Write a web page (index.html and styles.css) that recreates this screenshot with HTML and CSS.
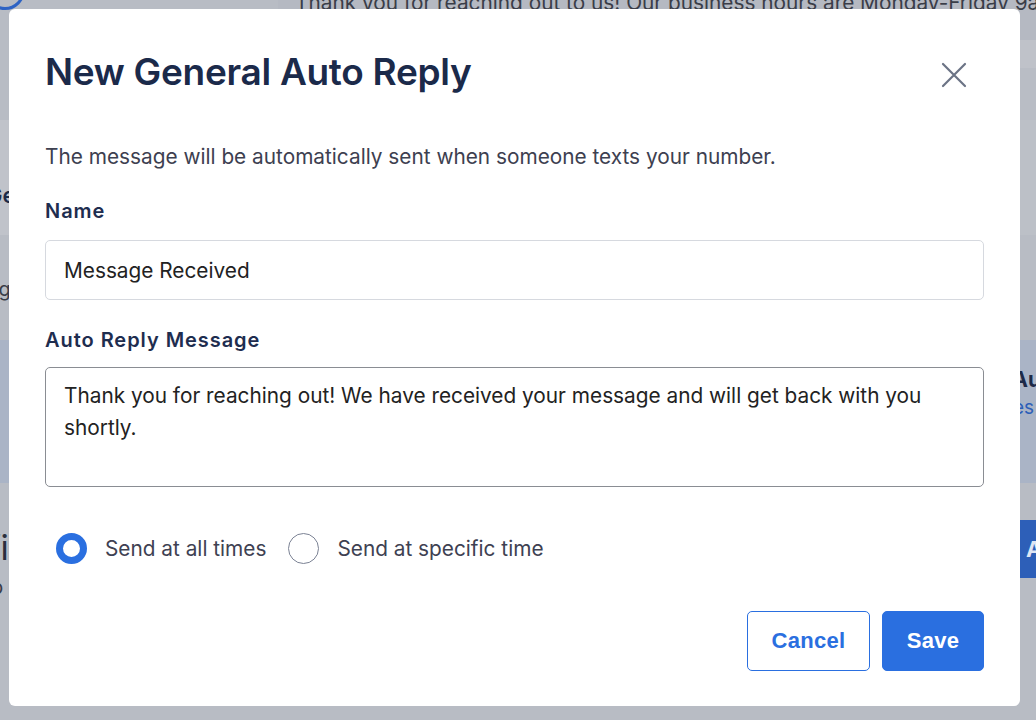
FILE: index.html
```html
<!DOCTYPE html>
<html lang="en">
<head>
<meta charset="utf-8">
<title>New General Auto Reply</title>
<link rel="stylesheet" href="styles.css">
</head>
<body>
<div class="app">
  <div class="band b1">
    <div class="side-l"><span class="avatar"></span></div>
    <div class="main-top"><p class="bg-text">Thank you for reaching out to us! Our business hours are Monday-Friday 9am to 5pm.</p></div>
  </div>
  <div class="band b2">
    <div class="side-l"><span class="bg-word">Ge</span></div>
    <div class="main-mid"></div>
  </div>
  <div class="band b3">
    <div class="side-l"><span class="bg-small">Msg</span></div>
    <div class="main-mid"></div>
  </div>
  <div class="band b4">
    <div class="side-l"></div>
    <div class="main-blue"><span class="bg-bold">Au</span><span class="bg-link">es</span></div>
  </div>
  <div class="band b5">
    <div class="side-l"><span class="bg-big">fi</span><span class="bg-small">p</span></div>
    <div class="main-low"><span class="bg-btn">A</span></div>
  </div>
</div>

<div class="overlay">
  <div class="modal" role="dialog" aria-labelledby="modal-title">
    <div class="modal-head">
      <h1 id="modal-title" class="modal-title">New General Auto Reply</h1>
      <button class="close" aria-label="Close">
        <svg width="26" height="26" viewBox="0 0 26 26"><path d="M2 2 L24 24 M24 2 L2 24" stroke="#6b7385" stroke-width="2.2" stroke-linecap="round" fill="none"/></svg>
      </button>
    </div>
    <p class="subtitle">The message will be automatically sent when someone texts your number.</p>
    <label class="field-label" for="name">Name</label>
    <div class="input" id="name">Message Received</div>
    <label class="field-label second" for="msg">Auto Reply Message</label>
    <div class="textarea" id="msg">Thank you for reaching out! We have received your message and will get back with you shortly.</div>
    <div class="radios">
      <div class="radio-item"><span class="radio checked"></span><span class="radio-text">Send at all times</span></div>
      <div class="radio-item"><span class="radio"></span><span class="radio-text">Send at specific time</span></div>
    </div>
    <div class="actions">
      <button class="btn btn-outline">Cancel</button>
      <button class="btn btn-primary">Save</button>
    </div>
  </div>
</div>
</body>
</html>
```
FILE: styles.css
```css
* { box-sizing: border-box; }
html, body { margin: 0; padding: 0; }
body {
  width: 1036px;
  height: 720px;
  overflow: hidden;
  font-family: Inter, "Noto Sans", sans-serif;
  background: #b9bcc4;
}

/* background app (already dimmed) */
.app { display: flex; flex-direction: column; height: 720px; }
.band { display: flex; }
.side-l { width: 278px; flex-shrink: 0; position: relative; overflow: hidden; }
.main-top, .main-mid, .main-blue, .main-low { flex: 1; min-width: 0; overflow: hidden; display: flex; justify-content: flex-end; }
.b1 { height: 120px; }
.b1 .side-l { background: #b8bcc4; }
.main-top { background: linear-gradient(#b5b9c2 0 40px, #bfc2c9 40px 68px, #b9bdc5 68px); justify-content: flex-start; }
.bg-text { margin: -10px 0 0 17px; font-size: 20.8px; color: #3a3d48; white-space: nowrap; }
.avatar { display: block; width: 40px; height: 40px; border: 3px solid #2e63c4; border-radius: 50%; margin: -30px 0 0 -15px; }
.b2 { height: 115px; }
.b2 .side-l { background: #c0c3ca; }
.b2 .main-mid { background: #bcc0c7; }
.bg-word { position: absolute; left: -14px; top: 62px; font-size: 22px; font-weight: 600; color: #1d2a48; }
.b3 { height: 105px; }
.b3 .side-l, .b3 .main-mid { background: #b8bcc4; }
.bg-small { position: absolute; left: -30px; top: 42px; font-size: 20px; color: #3a3d48; }
.b4 { height: 143px; }
.b4 .side-l, .main-blue { background: #aab4c6; }
.main-blue { flex-direction: column; justify-content: flex-start; align-items: flex-end; padding-top: 26px; line-height: 28px; }
.bg-bold { font-size: 21px; font-weight: 700; color: #1d2a48; margin-right: -5px; }
.bg-link { font-size: 19px; color: #2d5fb8; margin-right: 2px; }
.b5 { flex: 1; }
.b5 .side-l { background: #b8bcc4; }
.main-low { background: #b8bcc4; align-items: flex-start; }
.bg-btn { margin-top: 37px; width: 16px; height: 58px; background: #2d5fb8; color: #dfe6f3; font-weight: 700; font-size: 22px; line-height: 58px; padding-left: 6px; overflow: hidden; }
.b5 .bg-big { position: absolute; left: -12px; top: 44px; font-size: 34px; color: #2b2f3d; }
.b5 .bg-small { top: 92px; left: -9px; }

/* modal */
.overlay { position: fixed; inset: 0; }
.modal {
  position: absolute;
  left: 9px;
  top: 9px;
  width: 1011px;
  height: 697px;
  background: #fff;
  border-radius: 6px;
  padding: 42px 36px 0 36px;
  display: flex;
  flex-direction: column;
}
.modal-head { display: flex; justify-content: space-between; align-items: flex-start; }
.modal-title {
  margin: 0;
  font-size: 37px;
  font-weight: 600;
  color: #1b2a4a;
  line-height: 42px;
  letter-spacing: -0.3px;
}
.close { border: 0; background: none; padding: 0; margin: 11px 17px 0 0; width: 26px; height: 26px; cursor: pointer; }
.close svg { display: block; }
.subtitle {
  margin: 52px 0 0;
  font-size: 20.8px;
  line-height: 24px;
  color: #3d4050;
}
.field-label {
  display: block;
  margin-top: 30px;
  font-size: 20px;
  line-height: 24px;
  font-weight: 600;
  color: #1e2d4f;
  letter-spacing: 0.95px;
}
.field-label.second { margin-top: 28px; }
.input {
  margin-top: 17px;
  height: 60px;
  border: 1px solid #d6d9df;
  border-radius: 5px;
  padding: 0 18px;
  display: flex;
  align-items: center;
  font-size: 20.8px;
  color: #222;
}
.textarea {
  margin-top: 15px;
  height: 120px;
  border: 1px solid #8a8d93;
  border-radius: 5px;
  padding: 12px 18px;
  font-size: 20.8px;
  line-height: 32px;
  color: #222;
}
.radios { display: flex; align-items: center; gap: 22px; margin-top: 46px; padding-left: 11px; }
.radio-item { display: flex; align-items: center; gap: 18px; }
.radio { width: 31px; height: 31px; border-radius: 50%; border: 1px solid #7b8294; display: block; }
.radio.checked { border: 7.5px solid #2a6fe0; }
.radio-text { font-size: 20.8px; color: #3e4152; }
.actions { display: flex; justify-content: flex-end; gap: 12px; margin-top: 47px; }
.btn {
  height: 60px;
  border-radius: 5px;
  font-family: "Liberation Sans", Arial, sans-serif;
  font-weight: 700;
  font-size: 22px;
  letter-spacing: 0.3px;
  cursor: pointer;
}
.btn-outline { width: 123px; background: #fff; border: 1px solid #2a6fe0; color: #2a6fe0; }
.btn-primary { width: 102px; background: #2a6fe0; border: 1px solid #2a6fe0; color: #fff; }
```
